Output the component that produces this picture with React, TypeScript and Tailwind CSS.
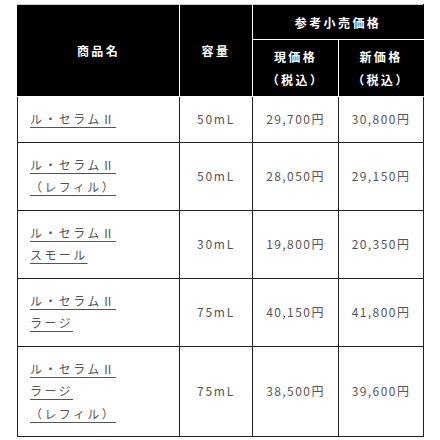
const rows = [
  { name: ["ル・セラムⅡ"], volume: "50mL", current: "29,700円", next: "30,800円" },
  { name: ["ル・セラムⅡ", "（レフィル）"], volume: "50mL", current: "28,050円", next: "29,150円" },
  { name: ["ル・セラムⅡ", "スモール"], volume: "30mL", current: "19,800円", next: "20,350円" },
  { name: ["ル・セラムⅡ", "ラージ"], volume: "75mL", current: "40,150円", next: "41,800円" },
  { name: ["ル・セラムⅡ", "ラージ", "（レフィル）"], volume: "75mL", current: "38,500円", next: "39,600円" },
];

export default function App() {
  return (
    <div
      className="h-[440px] w-[440px] bg-white pt-[4px] pl-[17px]"
      style={{ fontFamily: '"Noto Sans CJK JP", "Noto Sans", sans-serif' }}
    >
      <table className="w-[406px] table-fixed border-collapse">
        <colgroup>
          <col className="w-[162px]" />
          <col className="w-[73px]" />
          <col className="w-[86px]" />
          <col className="w-[85px]" />
        </colgroup>
        <thead>
          <tr>
            <th
              rowSpan={2}
              className="border border-white border-t-[#ccc] border-l-black bg-black text-[12px] font-bold leading-[23px] tracking-[0.2em] text-white"
            >
              商品名
            </th>
            <th
              rowSpan={2}
              className="border border-white border-t-[#ccc] bg-black text-[12px] font-bold leading-[23px] tracking-[0.2em] text-white"
            >
              容量
            </th>
            <th
              colSpan={2}
              className="h-[35px] border border-white border-t-[#ccc] border-r-black bg-black text-[12px] font-bold leading-[23px] tracking-[0.2em] text-white"
            >
              参考小売価格
            </th>
          </tr>
          <tr>
            <th className="h-[57px] border border-white bg-black text-[12px] font-bold leading-[23px] tracking-[0.2em] text-white">
              現価格
              <br />
              （税込）
            </th>
            <th className="h-[57px] border border-white border-r-black bg-black text-[12px] font-bold leading-[23px] tracking-[0.2em] text-white">
              新価格
              <br />
              （税込）
            </th>
          </tr>
        </thead>
        <tbody>
          {rows.map((row, i) => (
            <tr key={i}>
              <td className="border border-[#222] px-[12px] py-[11px] text-[12px] leading-[22.5px] tracking-[0.2em] text-[#555]">
                {row.name.map((line, j) => (
                  <div key={j}>
                    <a href="#" className="underline decoration-[#555] underline-offset-[3px]">
                      {line}
                    </a>
                  </div>
                ))}
              </td>
              <td className="border border-[#222] text-center text-[12px] tracking-[0.15em] text-[#555]">
                {row.volume}
              </td>
              <td className="border border-[#222] text-center text-[12px] tracking-[0.12em] text-[#555]">
                {row.current}
              </td>
              <td className="border border-[#222] text-center text-[12px] tracking-[0.12em] text-[#555]">
                {row.next}
              </td>
            </tr>
          ))}
        </tbody>
      </table>
    </div>
  );
}
